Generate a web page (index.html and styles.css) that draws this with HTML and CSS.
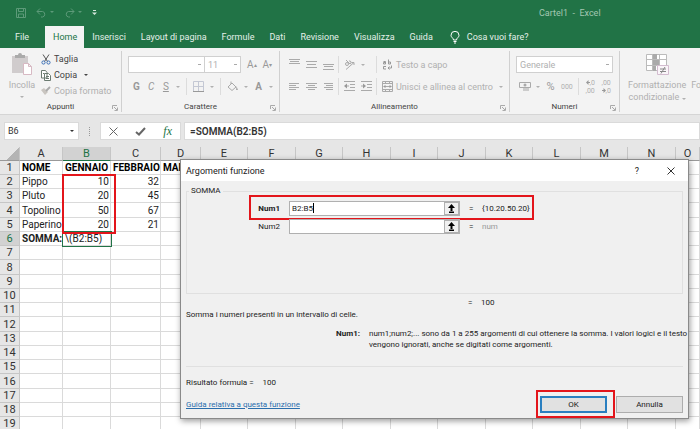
FILE: index.html
```html
<!DOCTYPE html>
<html lang="it">
  <head>
    <meta charset="UTF-8" />
    <meta name="viewport" content="width=device-width, initial-scale=1.0" />
    <title>Cartel1 - Excel</title>
    <link rel="stylesheet" href="styles.css">
  </head>
  <body>
    <header>
      <div class="title-bar">
        <div class="quick-access">
          <button aria-label="Salva"><svg width="10" height="10" viewBox="0 0 10 10"><path d="M.5.5h9v9h-9zM2.500.5v3h5v-3M2.500 9.500v-3.500h5v3.500"/></svg></button>
          <button aria-label="Annulla"><svg width="18" height="10" viewBox="0 0 18 10"><path d="M4 .5 1 3.500l3 3M1 3.500h5.500a2.800 2.800 0 0 1 0 5.500H5"/><path class="solid" d="M14 3h4l-2 2z"/></svg></button>
          <button aria-label="Ripeti"><svg width="18" height="10" viewBox="0 0 18 10"><path d="M7 .5l3 3-3 3M10 3.500H4.500a2.800 2.800 0 0 0 0 5.500H6"/><path class="solid" d="M14 3h4l-2 2z"/></svg></button>
          <button class="customize" aria-label="Personalizza"><svg width="5" height="6" viewBox="0 0 5 6"><path class="solid" d="M1 0h3v1H1zM0 2.500h5L2.500 5z"/></svg></button>
        </div>
        <span class="doc-title">Cartel1&nbsp; -&nbsp; Excel</span>
      </div>
      <nav>
        <a href="#" class="file">File</a>
        <a href="#" class="active">Home</a>
        <a href="#">Inserisci</a>
        <a href="#">Layout di pagina</a>
        <a href="#">Formule</a>
        <a href="#">Dati</a>
        <a href="#">Revisione</a>
        <a href="#">Visualizza</a>
        <a href="#">Guida</a>
        <a href="#" class="tell-me"><svg width="10" height="13" viewBox="0 0 10 13"><path d="M3.500 9C3.500 7 1 6.500 1 4.300a4 4 0 0 1 8 0C9 6.500 6.500 7 6.500 9zM3.500 10.500h3M4 12h2"/></svg>Cosa vuoi fare?</a>
      </nav>
    </header>

    <div class="ribbon">
      <section class="group clipboard">
        <div class="group-body">
          <button class="big">
            <svg width="22" height="23" viewBox="0 0 22 23"><path fill="#d0cccd" d="M1 3h16v17H1z"/><path fill="#aaa" d="M4 2h3a2 2 0 0 1 4 0h3v3H4z"/><path fill="#fff" stroke="#d7b9c3" d="M12.500 10.500h5l3 3v8h-8zM17.500 10.500v3h3"/></svg>
            <span>Incolla</span>
            <i class="caret"></i>
          </button>
          <div class="stack">
            <button class="on"><svg width="10" height="11" viewBox="0 0 10 11"><path fill="none" stroke="#555" d="M2 .5l4.500 7M8 .5l-4.500 7"/><circle cx="2.500" cy="8.500" r="1.600" fill="none" stroke="#3c70b5"/><circle cx="7.500" cy="8.500" r="1.600" fill="none" stroke="#3c70b5"/></svg>Taglia</button>
            <button class="on"><svg width="10" height="11" viewBox="0 0 10 11"><path fill="#fff" stroke="#6a7a70" d="M.5.5h4l1.500 2v5.500H.5zM3.500 3.500h4l2 2v5h-6z"/><path stroke="#6a7a70" d="M5 6.500h3M5 8.500h3M2 3.500h1"/></svg>Copia<i class="caret"></i></button>
            <button><svg width="10" height="10" viewBox="0 0 10 10"><path fill="#c9c5c0" d="M0 4l3-2 4 4-3 3z"/><path stroke="#aaa" stroke-width="2" d="M5 5l4-4"/></svg>Copia formato</button>
          </div>
        </div>
        <h2>Appunti</h2>
        <svg class="launcher" width="6" height="6" viewBox="0 0 6 6"><path d="M.5 4V.5H5M2 2l3 3M5.500 2.500v3h-3"/></svg>
      </section>

      <section class="group font">
        <div class="group-body rows">
          <div class="row">
            <select class="font-name" aria-label="Tipo di carattere"><option></option></select>
            <select class="font-size" aria-label="Dimensione"><option>11</option></select>
            <button class="grow">A<sup>▴</sup></button>
            <button class="grow">A<sup>▾</sup></button>
          </div>
          <div class="row">
            <button class="letter"><b>G</b></button>
            <button class="letter"><em>C</em></button>
            <button class="letter"><u>S</u></button>
            <i class="caret"></i>
            <i class="sep"></i>
            <button aria-label="Bordi"><svg width="11" height="11" viewBox="0 0 11 11"><path fill="none" stroke="#c4c8d4" d="M.5.5h10v10H.5zM5.500.5v10M.5 5.500h10"/><path stroke="#999" d="M0 10.500h11"/></svg></button>
            <i class="caret"></i>
            <i class="sep"></i>
            <button aria-label="Colore riempimento"><svg width="11" height="11" viewBox="0 0 11 11"><path fill="none" stroke="#aaa" d="M1 6l4-4 4 4-4 3.500zM4 3V.5"/><path fill="#aaa" d="M9.500 5l1.500 4H9z"/></svg></button>
            <i class="caret"></i>
            <button class="letter"><b>A</b></button>
            <i class="caret"></i>
          </div>
        </div>
        <h2>Carattere</h2>
        <svg class="launcher" width="6" height="6" viewBox="0 0 6 6"><path d="M.5 4V.5H5M2 2l3 3M5.500 2.500v3h-3"/></svg>
      </section>

      <section class="group align">
        <div class="group-body rows">
          <div class="row">
            <button aria-label="In alto"><svg width="11" height="11" viewBox="0 0 11 11"><path stroke="#aaa" d="M0 .5h11M1 2.500h9M0 4.500h11"/></svg></button>
            <button aria-label="Al centro"><svg width="11" height="11" viewBox="0 0 11 11"><path stroke="#aaa" d="M0 2.500h11M1 5.500h9M0 8.500h11"/></svg></button>
            <button aria-label="In basso"><svg width="11" height="11" viewBox="0 0 11 11"><path stroke="#aaa" d="M0 5.500h11M1 7.500h9M0 10.500h11"/></svg></button>
            <i class="sep"></i>
            <button aria-label="Orientamento"><svg width="11" height="11" viewBox="0 0 11 11"><circle cx="3" cy="5" r="1.500" fill="none" stroke="#aaa"/><path fill="none" stroke="#aaa" d="M2 1l4 4M6 5a1.500 1.500 0 1 0-1-3M2 10.500l8-7M7.500 3.500H10V6"/></svg></button>
            <i class="caret"></i>
            <i class="sep tail"></i>
            <button class="wide"><svg width="11" height="11" viewBox="0 0 11 11"><path fill="none" stroke="#999" d="M1.500 2.500h2v2.500h-2v-1.500h2M6.500.5v4.500h2v-2h-2M4 7.500H1.500V10H4M9.500 6.500V9H6M7.500 7.500 6 9l1.500 1.500"/></svg>Testo a capo</button>
          </div>
          <div class="row">
            <button aria-label="A sinistra"><svg width="11" height="11" viewBox="0 0 11 11"><path stroke="#aaa" d="M0 2.500h10M0 4.500h7M0 6.500h10M0 8.500h7"/></svg></button>
            <button aria-label="Centra"><svg width="11" height="11" viewBox="0 0 11 11"><path stroke="#aaa" d="M0 2.500h11M2 4.500h7M0 6.500h11M2 8.500h7"/></svg></button>
            <button aria-label="A destra"><svg width="11" height="11" viewBox="0 0 11 11"><path stroke="#aaa" d="M1 2.500h9M3 4.500h7M1 6.500h9M3 8.500h7"/></svg></button>
            <i class="sep"></i>
            <button aria-label="Riduci rientro"><svg width="11" height="11" viewBox="0 0 11 11"><path stroke="#aaa" d="M0 .5h11M6 3.500h5M6 6.500h5M0 9.500h11M1 5h4"/><path fill="#999" d="M0 5l3-2.500v5z"/></svg></button>
            <button aria-label="Aumenta rientro"><svg width="11" height="11" viewBox="0 0 11 11"><path stroke="#aaa" d="M0 .5h11M6 3.500h5M6 6.500h5M0 9.500h11M0 5h4"/><path fill="#999" d="M5 5 2 2.500v5z"/></svg></button>
            <i class="sep"></i>
            <button class="wide"><svg width="11" height="11" viewBox="0 0 11 11"><path fill="none" stroke="#aaa" d="M.5.5h10v10H.5zM.5 2.500h10M.5 8.500h10M3.500.5v2M7.500.5v2M3.500 8.500v2M7.500 8.500v2M2 5.500h7"/><path fill="#999" d="M1 5.500 3.500 4v3zM10 5.500 7.500 4v3z"/></svg>Unisci e allinea al centro</button>
            <i class="caret"></i>
          </div>
        </div>
        <h2>Allineamento</h2>
        <svg class="launcher" width="6" height="6" viewBox="0 0 6 6"><path d="M.5 4V.5H5M2 2l3 3M5.500 2.500v3h-3"/></svg>
      </section>

      <section class="group numbers">
        <div class="group-body rows">
          <div class="row">
            <select class="format" aria-label="Formato numero"><option>Generale</option></select>
          </div>
          <div class="row">
            <button aria-label="Valuta"><svg width="12" height="11" viewBox="0 0 12 11"><path fill="none" stroke="#aaa" d="M.5 1.500h11v5H.5z"/><circle cx="6" cy="4" r="1.500" fill="#aaa"/><path fill="#ccc" d="M4 7h6v3H4z"/></svg></button>
            <i class="caret"></i>
            <button class="letter percent">%</button>
            <button class="thousands">000</button>
            <i class="sep"></i>
            <button class="decimals"><span><svg width="4" height="5" viewBox="0 0 4 5"><path d="M0 2.500 2.500 0v2H4v1H2.500v2z"/></svg>,0</span><span>,00</span></button>
            <button class="decimals"><span>,00</span><span><svg width="4" height="5" viewBox="0 0 4 5"><path d="M4 2.500 1.500 0v2H0v1h1.500v2z"/></svg>,0</span></button>
          </div>
        </div>
        <h2>Numeri</h2>
        <svg class="launcher" width="6" height="6" viewBox="0 0 6 6"><path d="M.5 4V.5H5M2 2l3 3M5.500 2.500v3h-3"/></svg>
      </section>

      <section class="group styles">
        <div class="group-body">
          <button class="big">
            <svg width="23" height="23" viewBox="0 0 23 23"><path fill="#fff" stroke="#bbb" d="M.5 1.500h20v16H.5zM.5 6.500h20M.5 12.500h20M6.500 1.500v16M13.500 1.500v16"/><path fill="#aaa" d="M7 1h4v5H7zM7 7h6v5H7zM7 13h3v5H7z"/><path fill="#faf5f9" stroke="#d3bccf" d="M11.500 12.500h11v9h-11z"/><path stroke="#888" d="M14 16h6M14 18.500h6M15 20.500l4-6.500"/></svg>
            <span>Formattazione<br>condizionale <i class="caret"></i></span>
          </button>
          <button class="big"><svg width="23" height="23"></svg><span>Formatta</span></button>
        </div>
      </section>
    </div>

    <div class="formula-bar">
      <div class="name-box"><input type="text" value="B6" aria-label="Casella nome"><i class="caret"></i></div>
      <i class="dots"></i>
      <div class="fx">
        <button aria-label="Annulla"><svg width="9" height="9" viewBox="0 0 9 9"><path d="M.5.5l8 8M8.500.5l-8 8"/></svg></button>
        <button aria-label="Invio"><svg width="11" height="9" viewBox="0 0 11 9"><path stroke-width="2" d="M1 5l3 2.500L10 1"/></svg></button>
        <button class="insert"><em>fx</em></button>
      </div>
      <input class="formula" type="text" value="=SOMMA(B2:B5)" aria-label="Barra della formula">
    </div>

    <main>
      <table>
        <colgroup>
          <col class="c-row"><col class="c-a"><col class="c-b"><col class="c-c"><col class="c-d">
          <col class="odd"><col><col class="odd"><col><col class="odd"><col><col class="odd"><col><col class="odd"><col><col class="c-last">
        </colgroup>
        <thead>
          <tr><th class="corner"></th><th>A</th><th class="sel">B</th><th>C</th><th>D</th><th>E</th><th>F</th><th>G</th><th>H</th><th>I</th><th>J</th><th>K</th><th>L</th><th>M</th><th>N</th><th>O</th></tr>
        </thead>
        <tbody>
          <tr class="bold"><th>1</th><td>NOME</td><td>GENNAIO</td><td>FEBBRAIO</td><td>MARZO</td><td></td><td></td><td></td><td></td><td></td><td></td><td></td><td></td><td></td><td></td><td></td></tr>
          <tr><th>2</th><td>Pippo</td><td class="num">10</td><td class="num">32</td><td></td><td></td><td></td><td></td><td></td><td></td><td></td><td></td><td></td><td></td><td></td><td></td></tr>
          <tr><th>3</th><td>Pluto</td><td class="num">20</td><td class="num">45</td><td></td><td></td><td></td><td></td><td></td><td></td><td></td><td></td><td></td><td></td><td></td><td></td></tr>
          <tr><th>4</th><td>Topolino</td><td class="num">50</td><td class="num">67</td><td></td><td></td><td></td><td></td><td></td><td></td><td></td><td></td><td></td><td></td><td></td><td></td></tr>
          <tr><th>5</th><td>Paperino</td><td class="num">20</td><td class="num">21</td><td></td><td></td><td></td><td></td><td></td><td></td><td></td><td></td><td></td><td></td><td></td><td></td></tr>
          <tr><th class="sel">6</th><td><b>SOMMA:</b></td><td class="current">\(B2:B5)</td><td></td><td></td><td></td><td></td><td></td><td></td><td></td><td></td><td></td><td></td><td></td><td></td><td></td></tr>
          <tr><th>7</th><td></td><td></td><td></td><td></td><td></td><td></td><td></td><td></td><td></td><td></td><td></td><td></td><td></td><td></td><td></td></tr>
          <tr><th>8</th><td></td><td></td><td></td><td></td><td></td><td></td><td></td><td></td><td></td><td></td><td></td><td></td><td></td><td></td><td></td></tr>
          <tr><th>9</th><td></td><td></td><td></td><td></td><td></td><td></td><td></td><td></td><td></td><td></td><td></td><td></td><td></td><td></td><td></td></tr>
          <tr><th>10</th><td></td><td></td><td></td><td></td><td></td><td></td><td></td><td></td><td></td><td></td><td></td><td></td><td></td><td></td><td></td></tr>
          <tr><th>11</th><td></td><td></td><td></td><td></td><td></td><td></td><td></td><td></td><td></td><td></td><td></td><td></td><td></td><td></td><td></td></tr>
          <tr><th>12</th><td></td><td></td><td></td><td></td><td></td><td></td><td></td><td></td><td></td><td></td><td></td><td></td><td></td><td></td><td></td></tr>
          <tr><th>13</th><td></td><td></td><td></td><td></td><td></td><td></td><td></td><td></td><td></td><td></td><td></td><td></td><td></td><td></td><td></td></tr>
          <tr><th>14</th><td></td><td></td><td></td><td></td><td></td><td></td><td></td><td></td><td></td><td></td><td></td><td></td><td></td><td></td><td></td></tr>
          <tr><th>15</th><td></td><td></td><td></td><td></td><td></td><td></td><td></td><td></td><td></td><td></td><td></td><td></td><td></td><td></td><td></td></tr>
          <tr><th>16</th><td></td><td></td><td></td><td></td><td></td><td></td><td></td><td></td><td></td><td></td><td></td><td></td><td></td><td></td><td></td></tr>
          <tr><th>17</th><td></td><td></td><td></td><td></td><td></td><td></td><td></td><td></td><td></td><td></td><td></td><td></td><td></td><td></td><td></td></tr>
          <tr><th>18</th><td></td><td></td><td></td><td></td><td></td><td></td><td></td><td></td><td></td><td></td><td></td><td></td><td></td><td></td><td></td></tr>
          <tr><th>19</th><td></td><td></td><td></td><td></td><td></td><td></td><td></td><td></td><td></td><td></td><td></td><td></td><td></td><td></td><td></td></tr>
        </tbody>
      </table>
      <div class="mark mark-range"></div>

      <div class="dialog" role="dialog" aria-labelledby="dialog-title">
        <div class="dialog-title">
          <span id="dialog-title">Argomenti funzione</span>
          <button>?</button>
          <button aria-label="Chiudi"><svg width="8" height="8" viewBox="0 0 8 8"><path stroke="#333" d="M.5.5l7 7M7.500.5l-7 7"/></svg></button>
        </div>
        <div class="dialog-body">
          <fieldset>
            <legend>SOMMA</legend>
            <div class="arg">
              <label for="num1"><b>Num1</b></label>
              <div class="ref"><input type="text" id="num1" value="B2:B5"><i class="cursor"></i><button aria-label="Comprimi"><svg width="7" height="9" viewBox="0 0 7 9"><path d="M3.500 0 7 4H4.500v3h-2V4H0zM1 7.500h5V9H1z"/></svg></button></div>
              <span>=</span>
              <span class="value">{10.20.50.20}</span>
              <div class="mark mark-arg"></div>
            </div>
            <div class="arg">
              <label for="num2">Num2</label>
              <div class="ref"><input type="text" id="num2"><button aria-label="Comprimi"><svg width="7" height="9" viewBox="0 0 7 9"><path d="M3.500 0 7 4H4.500v3h-2V4H0zM1 7.500h5V9H1z"/></svg></button></div>
              <span>=</span>
              <span class="value empty">num</span>
            </div>
          </fieldset>
          <div class="arg total"><span></span><span></span><span>=</span><span class="value">100</span></div>
          <p>Somma i numeri presenti in un intervallo di celle.</p>
          <dl>
            <dt>Num1:</dt>
            <dd>num1;num2;... sono da 1 a 255 argomenti di cui ottenere la somma. I valori logici e il testo<br>vengono ignorati, anche se digitati come argomenti.</dd>
          </dl>
          <p class="result"><span>Risultato formula =</span><span>100</span></p>
          <div class="actions">
            <a href="#">Guida relativa a questa funzione</a>
            <div class="ok"><button class="default">OK</button><div class="mark mark-ok"></div></div>
            <button>Annulla</button>
          </div>
        </div>
      </div>
    </main>
  </body>
</html>
```
FILE: styles.css
```css
* {
  box-sizing: border-box;
}
body {
  margin: 0;
  height: 100vh;
  display: flex;
  flex-direction: column;
  overflow: hidden;
  font-family: Roboto, "Open Sans", sans-serif;
  font-size: 9px;
  line-height: 12px;
  color: #333;
  background-color: #e6e6e6;
}
button,
input,
select {
  font: inherit;
  color: inherit;
  margin: 0;
  padding: 0;
  border: none;
  background: none;
}
svg {
  flex: none;
  display: block;
}
a {
  text-decoration: none;
}
.caret {
  flex: none;
  display: inline-block;
  border: 2px solid transparent;
  border-top-color: currentColor;
  border-bottom: 0;
}

/* title and tabs */
header {
  flex: none;
  background-color: #217346;
  color: white;
}
.title-bar {
  display: flex;
  align-items: center;
  height: 26px;
  padding-left: 16px;
}
.quick-access {
  display: flex;
  align-items: center;
  gap: 10px;
  width: 523px;
}
.quick-access button {
  color: #5d9a79;
}
.quick-access .customize {
  color: #d5e6dc;
}
.quick-access svg {
  fill: none;
  stroke: currentColor;
}
.quick-access .solid {
  fill: currentColor;
  stroke: none;
}
.doc-title {
  color: #a3c7b2;
}
nav {
  display: flex;
  height: 22px;
}
nav a {
  display: flex;
  align-items: center;
  padding: 0 7px 0 8px;
  color: #e4f0e9;
  white-space: nowrap;
}
nav .file {
  width: 45px;
  padding-left: 15px;
}
nav .active {
  background-color: #f3f3f3;
  color: #217346;
}
nav .tell-me {
  gap: 7px;
  padding-left: 10px;
}
nav svg {
  fill: none;
  stroke: white;
}

/* ribbon */
.ribbon {
  flex: none;
  display: flex;
  height: 67px;
  padding: 3px 0 2px;
  background-color: #f3f3f3;
  border-bottom: 1px solid #d5d5d5;
  color: #b0b0b0;
  overflow: hidden;
}
.group {
  flex: none;
  position: relative;
  display: flex;
  flex-direction: column;
  padding: 0 6px;
  border-right: 1px solid #d0d0d0;
}
.group h2 {
  margin: 0;
  font-size: 8px;
  font-weight: normal;
  line-height: 10px;
  text-align: center;
  color: #444;
}
.group button {
  display: flex;
  align-items: center;
  white-space: nowrap;
}
.group-body {
  flex: 1;
  display: flex;
}
.launcher {
  position: absolute;
  right: 3px;
  bottom: 1px;
  fill: none;
  stroke: #aaa;
}
.clipboard {
  width: 122px;
}
.font {
  width: 158px;
}
.align {
  width: 230px;
}
.numbers {
  width: 110px;
}
.styles {
  padding-left: 8px;
  border: none;
}
.group .big {
  flex-direction: column;
  gap: 3px;
  padding-top: 2px;
}
.clipboard .big {
  width: 32px;
}
.clipboard .big .caret {
  margin-top: 2px;
}
.styles .group-body {
  gap: 5px;
}
.stack {
  display: flex;
  flex-direction: column;
  gap: 4px;
  padding: 2px 0 0 3px;
}
.stack button {
  gap: 3px;
}
.stack .on {
  color: #444;
}
.stack .caret {
  margin-left: 4px;
}
.rows {
  flex-direction: column;
  gap: 5px;
  padding-top: 5px;
}
.row {
  display: flex;
  align-items: center;
  height: 17px;
}
.rows .row + .row {
  gap: 6px;
}
.sep {
  flex: none;
  width: 1px;
  height: 17px;
  background-color: #dcdcdc;
}
select {
  appearance: none;
  height: 17px;
  padding: 0 3px;
  border: 1px solid #d0d0d0;
  background: linear-gradient(#aaa, #aaa) right 3px center / 3px 1px no-repeat white;
}
.font-name {
  width: 77px;
}
.font-size {
  width: 37px;
  margin-left: -1px;
}
.grow {
  margin-left: 6px;
  font-size: 10px;
  color: #999;
}
.grow sup {
  font-size: 6px;
  line-height: 6px;
}
.letter {
  width: 11px;
  justify-content: center;
  font-size: 10px;
  color: #999;
}
.font .row + .row {
  padding-left: 4px;
}
.align .row {
  gap: 6px;
  padding-left: 3px;
}
.align .row .wide {
  gap: 3px;
}
.align .sep {
  margin: 0 -1px 0 -2px;
}
.align .tail {
  margin-left: 5px;
}
.format {
  width: 98px;
}
.numbers .row + .row {
  padding-left: 3px;
  gap: 5px;
}
.group .percent {
  font-size: 11px;
}
.thousands,
.group .decimals {
  font-size: 7px;
}
.group .decimals {
  flex-direction: column;
  align-items: flex-end;
  width: 11px;
  line-height: 8px;
}
.decimals span {
  display: flex;
  align-items: center;
}
.decimals svg {
  fill: #999;
}

/* formula bar */
.formula-bar {
  flex: none;
  display: flex;
  align-items: center;
  height: 32px;
  padding-left: 4px;
}
.name-box,
.fx,
.formula {
  height: 18px;
  background-color: white;
  border: 1px solid #dadada;
}
.name-box {
  display: flex;
  align-items: center;
  width: 75px;
  padding: 0 4px 0 3px;
}
.name-box input {
  flex: 1;
  min-width: 0;
}
.dots {
  width: 1px;
  height: 9px;
  margin: 0 10px;
  border-left: 1px dotted #999;
}
.fx {
  display: flex;
  align-items: center;
  justify-content: space-between;
  width: 81px;
  padding: 0 8px;
}
.fx svg {
  fill: none;
  stroke: #666;
}
.insert {
  font-family: "Liberation Serif", serif;
  font-size: 12px;
  color: #217346;
}
.formula {
  flex: 1;
  margin-left: 3px;
  padding-left: 5px;
  font-size: 10px;
  font-weight: 600;
}

/* sheet */
main {
  flex: 1;
  min-height: 0;
  position: relative;
}
table {
  width: 100%;
  table-layout: fixed;
  border-collapse: separate;
  border-spacing: 0;
  background-color: white;
  font-size: 10px;
}
col {
  width: 48px;
}
.odd {
  width: 47px;
}
.c-row {
  width: 20px;
}
.c-a {
  width: 43px;
}
.c-c {
  width: 50px;
}
.c-d {
  width: 40px;
}
.c-last {
  width: auto;
}
tr {
  height: 14px;
}
tbody tr:nth-child(4n) {
  height: 15px;
}
th,
td {
  padding: 0 1px 0 2px;
  line-height: 13px;
  border-right: 1px solid #dadada;
  border-bottom: 1px solid #dadada;
  white-space: nowrap;
}
td {
  overflow: hidden;
  color: #222;
}
th {
  padding: 0;
  font-size: 11px;
  font-weight: normal;
  background-color: #e6e6e6;
  border-color: #c6c6c6;
}
thead th {
  border-bottom-color: #999;
}
th.sel {
  background-color: #d2d2d2;
  color: #217346;
}
thead .sel {
  border-bottom-color: #217346;
}
.corner {
  background: linear-gradient(135deg, #e6e6e6 60%, #b4b4b4 60%);
}
.bold td {
  font-weight: bold;
  color: black;
}
.num {
  text-align: right;
}
.current {
  outline: 1px solid #217346;
}

/* red highlights */
.mark {
  position: absolute;
  border: 2px solid #e3151b;
  pointer-events: none;
}
.mark-range {
  left: 62px;
  top: 27px;
  width: 54px;
  height: 60px;
}
.mark-arg {
  inset: -6px 148px -4px 62px;
}
.mark-ok {
  inset: -6px -8px -5px -4px;
}

/* dialog */
.dialog {
  position: absolute;
  left: 180px;
  right: 11px;
  top: 12px;
  border: 1px solid #8a8a8a;
  background-color: #f0f0f0;
  box-shadow: 1px 2px 6px rgba(0, 0, 0, 0.4);
  font-size: 8px;
  line-height: 10px;
  color: #222;
}
.dialog-title {
  display: flex;
  align-items: center;
  gap: 28px;
  height: 21px;
  padding: 0 13px 0 5px;
  background-color: white;
  font-size: 9px;
}
.dialog-title span {
  flex: 1;
}
.dialog-body {
  padding: 5px;
}
fieldset {
  height: 108px;
  margin: 0;
  padding: 5px 0 0;
  border: 1px solid #e0e0e0;
}
legend {
  margin-left: 2px;
  padding: 0 2px;
}
.arg {
  position: relative;
  display: grid;
  grid-template-columns: 93px 171px 4px 1fr;
  align-items: center;
  column-gap: 9px;
  height: 15px;
  margin-bottom: 3px;
}
.arg label {
  text-align: right;
}
.ref {
  position: relative;
  display: flex;
  height: 15px;
  border: 1px solid #b0b0b0;
  background-color: white;
}
.ref input {
  flex: 1;
  min-width: 0;
  padding-left: 2px;
}
.ref button {
  display: flex;
  align-items: center;
  justify-content: center;
  width: 15px;
  border: 1px solid #b0b0b0;
  background-color: #f0f0f0;
}
.cursor {
  position: absolute;
  left: 23px;
  top: 1px;
  width: 1px;
  height: 10px;
  background-color: black;
}
.empty {
  color: #999;
}
.total {
  height: 10px;
  margin: 4px 0 2px;
}
p {
  margin: 0;
}
dl {
  display: grid;
  grid-template-columns: 174px 1fr;
  column-gap: 9px;
  margin: 8px 0 0;
  padding-bottom: 16px;
  border-bottom: 1px solid #e0e0e0;
  line-height: 11px;
  white-space: nowrap;
}
dt {
  text-align: right;
  font-weight: bold;
}
dd {
  margin: 0;
}
.result {
  display: flex;
  gap: 9px;
  margin: 11px 0 8px;
}
.actions {
  display: flex;
  align-items: center;
  gap: 9px;
}
.actions a {
  margin-right: auto;
  text-decoration: underline;
  color: #2a6ead;
}
.actions button {
  width: 67px;
  height: 17px;
  background-color: #e1e1e1;
  border: 1px solid #adadad;
}
.actions .default {
  border: 2px solid #2a7fc0;
}
.ok {
  position: relative;
  display: flex;
}
```
